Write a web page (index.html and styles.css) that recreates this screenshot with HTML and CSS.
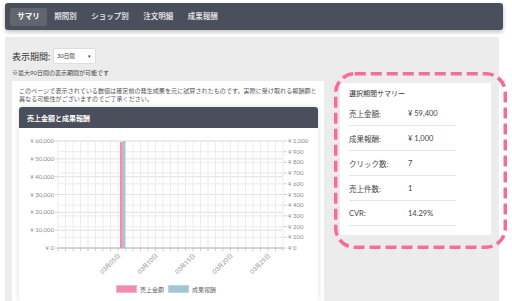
FILE: index.html
```html
<!DOCTYPE html>
<html lang="ja">
  <head>
    <meta charset="UTF-8" />
    <meta name="viewport" content="width=device-width, initial-scale=1.0" />
    <title>サマリ</title>
    <link rel="stylesheet" href="styles.css">
  </head>
  <body>
    <nav class="nav">
      <a class="nav-item active">サマリ</a>
      <a class="nav-item">期間別</a>
      <a class="nav-item">ショップ別</a>
      <a class="nav-item">注文明細</a>
      <a class="nav-item">成果報酬</a>
    </nav>

    <main class="main">
      <div class="period">
        <span class="period-label">表示期間:</span>
        <div class="select">30日間 <span class="caret">▾</span></div>
      </div>
      <p class="period-note">※最大90日間の表示期間が可能です</p>

      <div class="content">
        <section class="left-panel">
          <p class="notice">
            このページで表示されている数値は確定前の発生成果を元に試算されたものです。実際に受け取れる報酬額と<br>異なる可能性がございますのでご了承ください。
          </p>
          <div class="card">
            <div class="card-header">売上金額と成果報酬</div>
            <svg class="chart" id="chart" viewBox="0 0 299 173"></svg>
          </div>
        </section>

        <aside class="summary">
          <div class="summary-title">選択期間サマリー</div>
          <div class="summary-row"><span class="label">売上金額:</span><span>¥ 59,400</span></div>
          <div class="summary-row"><span class="label">成果報酬:</span><span>¥ 1,000</span></div>
          <div class="summary-row"><span class="label">クリック数:</span><span>7</span></div>
          <div class="summary-row"><span class="label">売上件数:</span><span>1</span></div>
          <div class="summary-row"><span class="label">CVR:</span><span>14.29%</span></div>
          <!-- highlight drawn on top of the summary box -->
          <svg class="highlight" viewBox="0 0 173 177">
            <rect x="1.75" y="1.75" width="169.5" height="173.5" rx="19" />
          </svg>
        </aside>
      </div>
    </main>

    <script>
      const svg = document.getElementById("chart");
      const NS = "http://www.w3.org/2000/svg";
      const L = 39, R = 264, T = 13, B = 120;
      const days = 30;
      const step = (R - L) / days;

      function add(tag, attrs, text) {
        const el = document.createElementNS(NS, tag);
        for (const k in attrs) el.setAttribute(k, attrs[k]);
        if (text) el.textContent = text;
        svg.appendChild(el);
        return el;
      }

      // right axis grid (0 - 1,000)
      for (let i = 0; i <= 10; i++) {
        const y = B - (i * (B - T)) / 10;
        add("line", { x1: L, y1: y, x2: R, y2: y, class: "grid-light" });
        add("line", { x1: R, y1: y, x2: R + 4, y2: y, class: "tick" });
        add("text", { x: R + 5, y: y + 2, class: "axis" }, "¥ " + (i * 100).toLocaleString("en"));
      }

      // left axis grid (0 - 60,000)
      for (let i = 0; i <= 6; i++) {
        const y = B - (i * (B - T)) / 6;
        add("line", { x1: L, y1: y, x2: R, y2: y, class: "grid" });
        add("line", { x1: L - 3, y1: y, x2: L, y2: y, class: "tick" });
        add("text", { x: L - 4, y: y + 2, class: "axis", "text-anchor": "end" }, "¥ " + (i * 10000).toLocaleString("en"));
      }

      // day columns
      for (let i = 0; i <= days; i++) {
        const x = L + i * step;
        add("line", { x1: x, y1: T, x2: x, y2: B, class: "grid-light" });
        add("line", { x1: x, y1: B, x2: x, y2: B + 3, class: "tick" });
      }
      add("line", { x1: L, y1: B, x2: R, y2: B, class: "base" });

      // 03/05 has the only data
      const sales = 59400, reward = 1000;
      const hSales = (sales / 60000) * (B - T);
      const hReward = (reward / 1000) * (B - T);
      add("rect", { x: 101, y: B - hSales, width: 2.7, height: hSales, class: "bar-sales" });
      add("rect", { x: 103.7, y: B - hReward, width: 2.6, height: hReward, class: "bar-reward" });

      const labels = { 8: "03月05日", 13: "03月10日", 18: "03月15日", 23: "03月20日", 28: "03月25日" };
      for (const idx in labels) {
        const cx = L + (Number(idx) + 0.5) * step - 1;
        const cy = B + 8;
        add("text", { x: cx, y: cy, class: "axis", "text-anchor": "end", transform: `rotate(-45 ${cx} ${cy})` }, labels[idx]);
      }

      // legend
      add("rect", { x: 97.5, y: 157.5, width: 20, height: 7, class: "legend-sales" });
      add("text", { x: 121, y: 163.5, class: "legend" }, "売上金額");
      add("rect", { x: 149.5, y: 157.5, width: 20, height: 7, class: "legend-reward" });
      add("text", { x: 173, y: 163.5, class: "legend" }, "成果報酬");
    </script>
  </body>
</html>
```

FILE: styles.css
```css
html,
body {
  height: 301px;
  overflow: hidden;
}

body {
  margin: 0;
  font-family: Lato, "Noto Sans CJK JP", sans-serif;
  color: #333;
  background: #fff;
}

.nav {
  display: flex;
  align-items: center;
  height: 27px;
  margin: 3px 9px 0 5px;
  padding: 0 5px;
  background: #4a505b;
  border-radius: 3px;
  box-shadow: 0 2px 4px rgba(0, 0, 0, 0.25);
}

.nav-item {
  height: 18px;
  line-height: 18px;
  padding: 0 7.25px;
  font-size: 7.5px;
  font-weight: 700;
  color: #dcdde0;
  border-radius: 2px;
}

.nav-item.active {
  background: #60666f;
  color: #fff;
}

.main {
  margin: 7px 13px 0 5px;
  padding: 0 8px 0 7px;
  height: 264px;
  background: #ececec;
}

.period {
  display: flex;
  align-items: center;
  padding-top: 11px;
}

.period-label {
  font-size: 9px;
  margin-right: 3px;
  color: #333;
}

.select {
  display: flex;
  align-items: center;
  justify-content: space-between;
  box-sizing: border-box;
  width: 43px;
  height: 16px;
  padding: 0 4px 0 3px;
  background: #fff;
  border: 1px solid #dedede;
  border-radius: 2px;
  font-size: 5.5px;
  color: #333;
}

.caret {
  font-size: 5px;
}

.period-note {
  margin: 5px 0 0;
  font-size: 6px;
  line-height: 8px;
  color: #444;
}

.content {
  display: flex;
  align-items: flex-start;
  gap: 16px;
  margin-top: 4px;
}

.left-panel {
  box-sizing: border-box;
  width: 312px;
  height: 220px;
  padding: 6px 6px 0 7px;
  background: #fff;
  overflow: hidden;
}

.notice {
  margin: 0 0 4px;
  font-size: 6.1px;
  line-height: 8px;
  color: #555;
  white-space: nowrap;
}

.card {
  background: #fff;
  border-radius: 3px;
  box-shadow: 0 0 6px rgba(0, 0, 0, 0.12);
}

.card-header {
  display: flex;
  align-items: center;
  height: 21px;
  padding-left: 8px;
  background: #4a505b;
  color: #fff;
  font-size: 7px;
  font-weight: 700;
  border-radius: 3px 3px 0 0;
}

.chart {
  display: block;
  width: 299px;
  height: 173px;
}

.chart .axis,
.chart .legend {
  font-family: Lato, "Noto Sans CJK JP", sans-serif;
  font-size: 6px;
  fill: #8a8a8a;
}

.chart .legend {
  fill: #666;
}

.chart .grid {
  stroke: #e0e0e0;
  stroke-width: 1;
}

.chart .grid-light {
  stroke: #ececec;
  stroke-width: 1;
}

.chart .tick {
  stroke: #c4c4c4;
  stroke-width: 0.8;
}

.chart .base {
  stroke: #bbb;
  stroke-width: 1;
}

.bar-sales,
.legend-sales {
  fill: #f28bac;
}

.legend-sales {
  stroke: #f7b3c8;
}

.bar-reward,
.legend-reward {
  fill: #a3c4d3;
}

.legend-reward {
  stroke: #bcd5e0;
}

.summary {
  position: relative;
  box-sizing: border-box;
  width: 151px;
  height: 152px;
  margin-top: 2px;
  padding: 5px 0 0 9px;
  background: #fff;
}

.summary-title {
  font-size: 7px;
  line-height: 10px;
  margin-bottom: 3px;
  color: #333;
}

.summary-row {
  display: flex;
  align-items: center;
  box-sizing: border-box;
  width: 107px;
  height: 25px;
  border-bottom: 1px solid #e4e4e4;
  font-size: 7.5px;
  color: #444;
}

.summary-row .label {
  width: 59px;
}

.highlight {
  position: absolute;
  left: -6px;
  top: -11px;
  width: 173px;
  height: 177px;
  pointer-events: none;
}

.highlight rect {
  fill: none;
  stroke: #fb6a9c;
  stroke-width: 3.5;
  stroke-dasharray: 11 5;
}
```
